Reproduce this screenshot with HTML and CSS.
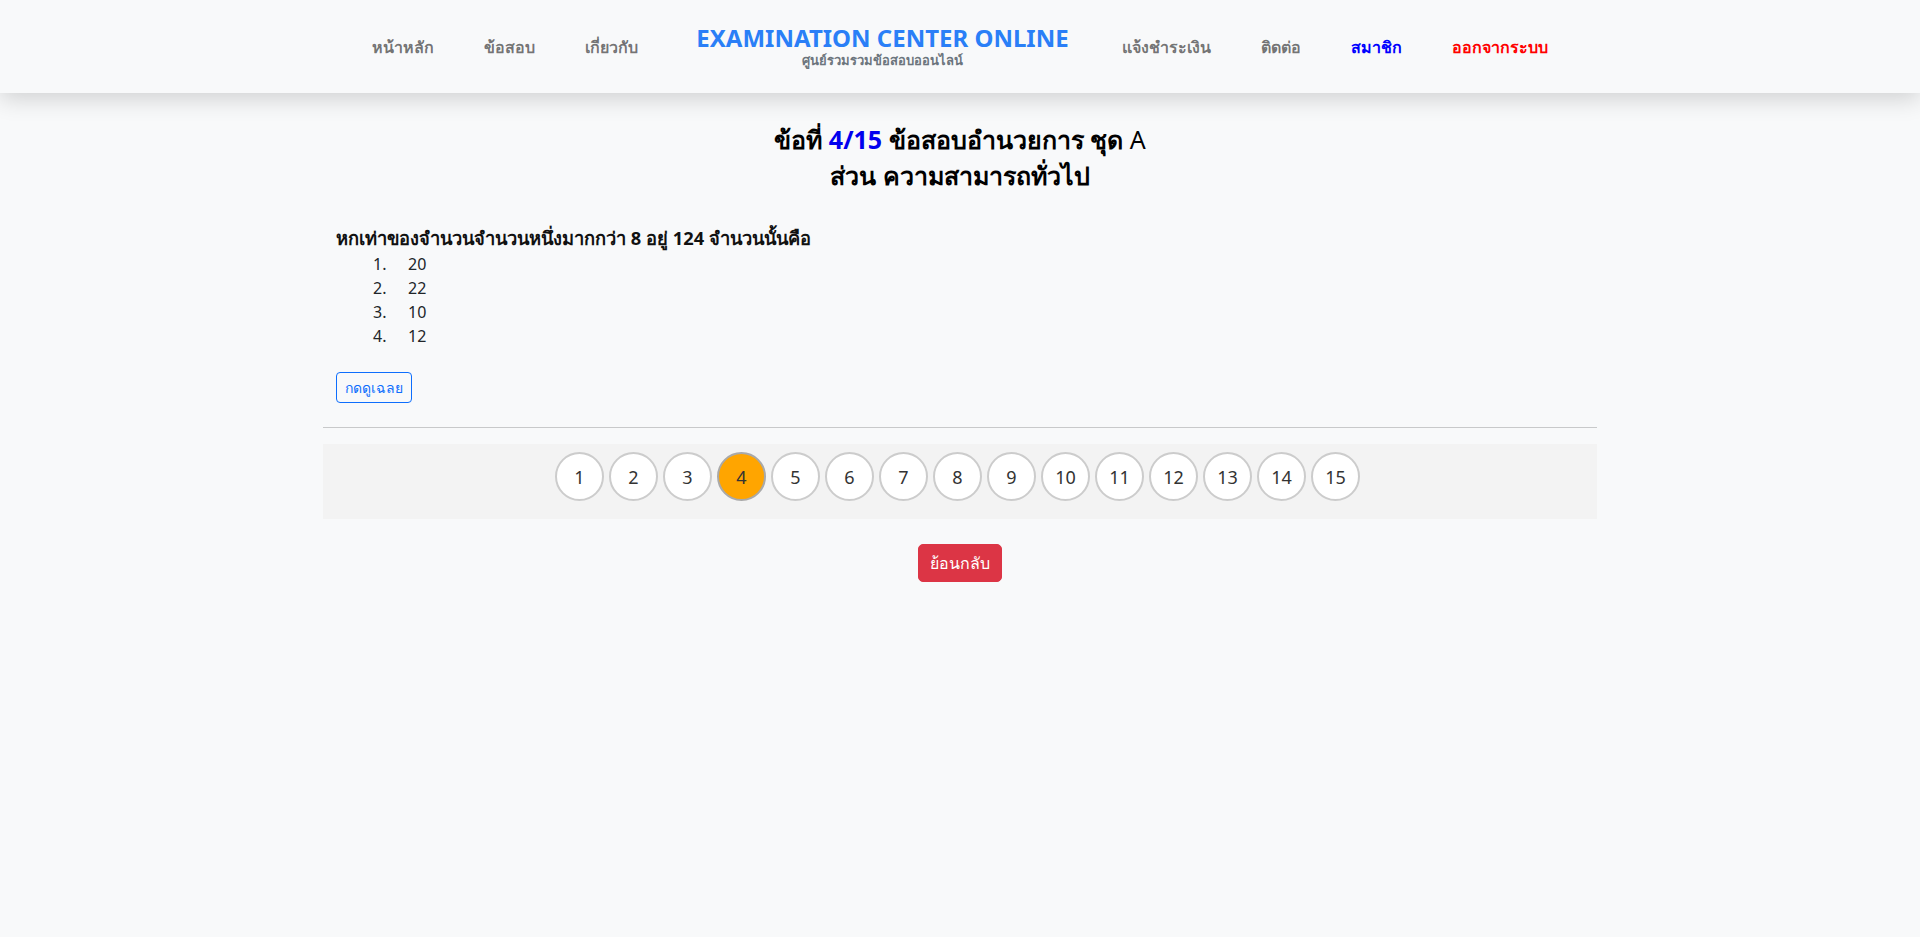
FILE: index.html
```html
<!DOCTYPE html>
<html lang="th">
<head>
<meta charset="utf-8">
<title>EXAMINATION CENTER ONLINE</title>
<link rel="stylesheet" href="styles.css">
</head>
<body>
<header class="topbar">
  <nav class="nav">
    <a class="nav-link" href="#">หน้าหลัก</a>
    <a class="nav-link" href="#">ข้อสอบ</a>
    <a class="nav-link" href="#">เกี่ยวกับ</a>
    <a class="brand" href="#">
      <span class="brand-title">EXAMINATION CENTER ONLINE</span>
      <span class="brand-sub">ศูนย์รวมรวมข้อสอบออนไลน์</span>
    </a>
    <a class="nav-link" href="#">แจ้งชำระเงิน</a>
    <a class="nav-link" href="#">ติดต่อ</a>
    <a class="nav-link nav-member" href="#">สมาชิก</a>
    <a class="nav-link nav-logout" href="#">ออกจากระบบ</a>
  </nav>
</header>

<main class="container">
  <h1 class="exam-title">
    <span class="line">ข้อที่ <span class="num">4/15</span> ข้อสอบอำนวยการ ชุด <span class="thin">A</span></span>
    <span class="line">ส่วน ความสามารถทั่วไป</span>
  </h1>

  <section class="question">
    <p class="q-text">หกเท่าของจำนวนจำนวนหนึ่งมากกว่า 8 อยู่ 124 จำนวนนั้นคือ</p>
    <ol class="options">
      <li class="opt"><span class="opt-no">1.</span><span class="opt-val">20</span></li>
      <li class="opt"><span class="opt-no">2.</span><span class="opt-val">22</span></li>
      <li class="opt"><span class="opt-no">3.</span><span class="opt-val">10</span></li>
      <li class="opt"><span class="opt-no">4.</span><span class="opt-val">12</span></li>
    </ol>
    <button class="btn-answer" type="button">กดดูเฉลย</button>
  </section>

  <hr class="divider">

  <div class="pager">
    <a class="page" href="#">1</a>
    <a class="page" href="#">2</a>
    <a class="page" href="#">3</a>
    <a class="page active" href="#">4</a>
    <a class="page" href="#">5</a>
    <a class="page" href="#">6</a>
    <a class="page" href="#">7</a>
    <a class="page" href="#">8</a>
    <a class="page" href="#">9</a>
    <a class="page" href="#">10</a>
    <a class="page" href="#">11</a>
    <a class="page" href="#">12</a>
    <a class="page" href="#">13</a>
    <a class="page" href="#">14</a>
    <a class="page" href="#">15</a>
  </div>

  <div class="back-row">
    <button class="btn-back" type="button">ย้อนกลับ</button>
  </div>
</main>
</body>
</html>
```

FILE: styles.css
```css
* { box-sizing: border-box; }

html, body {
  margin: 0;
  padding: 0;
}

body {
  background: #f8f9fa;
  font-family: "Noto Sans", "Open Sans", sans-serif;
  color: #212529;
  font-size: 16px;
  line-height: 24px;
}

a { text-decoration: none; }

.topbar {
  height: 93px;
  background: #f8f9fa;
  box-shadow: 0 6px 22px rgba(0, 0, 0, 0.16);
  position: relative;
  z-index: 1;
}

.nav {
  height: 100%;
  display: flex;
  align-items: center;
  justify-content: center;
}

.nav-link {
  padding: 0 25px;
  font-size: 16px;
  font-weight: 700;
  color: rgba(0, 0, 0, 0.55);
  line-height: 24px;
}

.nav-member { color: #0000ff; }
.nav-logout { color: #ff0000; }

.brand {
  display: flex;
  flex-direction: column;
  align-items: center;
  margin: -3px 3px 0 8px;
  padding: 0 25px;
}

.brand-title {
  font-size: 24px;
  font-weight: 700;
  color: #2a7ff7;
  line-height: 28px;
}

.brand-sub {
  font-size: 13px;
  font-weight: 600;
  color: #6c757d;
  line-height: 14px;
  margin-top: 1px;
}

.container {
  width: 1274px;
  margin: 0 auto;
  padding-top: 28px;
}

.exam-title {
  margin: 0;
  text-align: center;
  font-size: 25px;
  font-weight: 700;
  line-height: 36px;
  color: #000;
}

.exam-title .line { display: block; }
.exam-title .num { color: #0000ee; }
.exam-title .thin { font-weight: 400; }

.question {
  padding: 0 13px;
  margin-top: 31px;
}

.q-text {
  margin: 0;
  font-size: 18.3px;
  line-height: 28px;
  font-weight: 700;
  color: #111;
}

.options {
  list-style: none;
  margin: 0;
  padding: 0 0 0 37px;
}

.opt {
  display: flex;
  color: #212529;
}

.opt-no { width: 35px; }

.btn-answer {
  display: block;
  margin-top: 24px;
  height: 31px;
  padding: 4px 8px;
  font-family: inherit;
  font-size: 14px;
  line-height: 21px;
  color: #0d6efd;
  background: transparent;
  border: 1px solid #0d6efd;
  border-radius: 4px;
}

.divider {
  margin: 24px 0 0;
  border: 0;
  border-top: 1px solid #c8c9ca;
  height: 0;
}

.pager {
  margin-top: 16px;
  height: 75px;
  background: #f3f3f3;
  display: flex;
  justify-content: center;
  align-items: flex-start;
  gap: 5px;
  padding: 8px 5px 0 0;
}

.page {
  width: 49px;
  height: 49px;
  border: 2px solid #cccccc;
  border-radius: 50%;
  background: #fff;
  color: #333;
  font-size: 18px;
  display: flex;
  align-items: center;
  justify-content: center;
}

.page.active {
  background: #ffa500;
  border-color: #a9a9a9;
}

.back-row {
  display: flex;
  justify-content: center;
  margin-top: 25px;
}

.btn-back {
  height: 38px;
  padding: 6px 11px;
  font-family: inherit;
  font-size: 16px;
  line-height: 24px;
  color: #fff;
  background: #dc3545;
  border: 1px solid #dc3545;
  border-radius: 5px;
}
```
